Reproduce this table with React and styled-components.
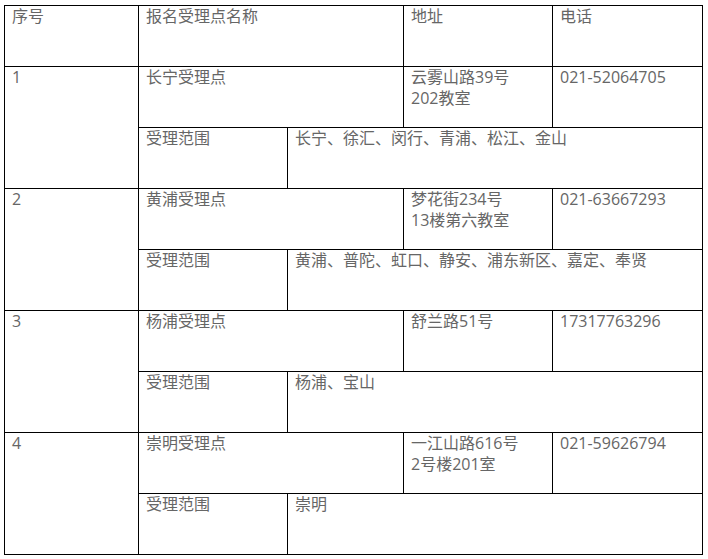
import React from 'react';
import styled, { createGlobalStyle } from 'styled-components';

const GlobalStyle = createGlobalStyle`
  html, body {
    margin: 0;
    padding: 0;
    background: #fff;
  }
  body {
    font-family: "Open Sans", "Noto Sans CJK SC", sans-serif;
    color: #666;
  }
`;

const Page = styled.div`
  padding: 5px 0 0 4px;
`;

const Table = styled.table`
  border-collapse: collapse;
  table-layout: fixed;
  width: 698px;
  font-size: 16px;
  line-height: 21px;
`;

const Cell = styled.td`
  border: 1px solid #000;
  padding: 0 7px 4px;
  height: 56px;
  vertical-align: top;
  text-align: left;
  font-weight: normal;
  color: #666;
`;

const sites = [
  {
    no: '1',
    name: '长宁受理点',
    address: ['云雾山路39号', '202教室'],
    phone: '021-52064705',
    range: '长宁、徐汇、闵行、青浦、松江、金山',
  },
  {
    no: '2',
    name: '黄浦受理点',
    address: ['梦花街234号', '13楼第六教室'],
    phone: '021-63667293',
    range: '黄浦、普陀、虹口、静安、浦东新区、嘉定、奉贤',
  },
  {
    no: '3',
    name: '杨浦受理点',
    address: ['舒兰路51号'],
    phone: '17317763296',
    range: '杨浦、宝山',
  },
  {
    no: '4',
    name: '崇明受理点',
    address: ['一江山路616号', '2号楼201室'],
    phone: '021-59626794',
    range: '崇明',
  },
];

const App = () => (
  <Page>
    <GlobalStyle />
    <Table>
      <colgroup>
        <col style={{ width: 134 }} />
        <col style={{ width: 149 }} />
        <col style={{ width: 116 }} />
        <col style={{ width: 149 }} />
        <col style={{ width: 150 }} />
      </colgroup>
      <tbody>
        <tr>
          <Cell>序号</Cell>
          <Cell colSpan={2}>报名受理点名称</Cell>
          <Cell>地址</Cell>
          <Cell>电话</Cell>
        </tr>
        {sites.map((s) => (
          <React.Fragment key={s.no}>
            <tr>
              <Cell rowSpan={2}>{s.no}</Cell>
              <Cell colSpan={2}>{s.name}</Cell>
              <Cell>
                {s.address.map((line, i) => (
                  <div key={i}>{line}</div>
                ))}
              </Cell>
              <Cell>{s.phone}</Cell>
            </tr>
            <tr>
              <Cell>受理范围</Cell>
              <Cell colSpan={3}>{s.range}</Cell>
            </tr>
          </React.Fragment>
        ))}
      </tbody>
    </Table>
  </Page>
);

export default App;
